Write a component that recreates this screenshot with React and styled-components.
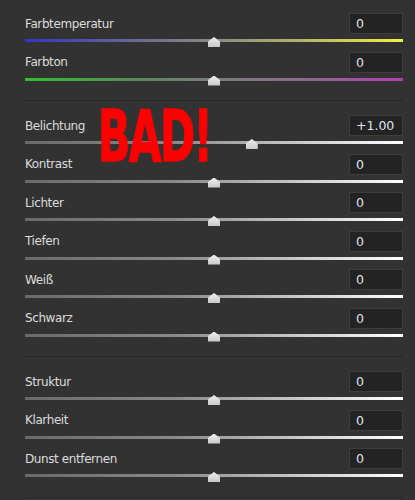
import styled, { createGlobalStyle } from "styled-components";

const Global = createGlobalStyle`
  html, body {
    margin: 0;
    padding: 0;
    background: #323232;
  }
  body {
    font-family: "DejaVu Sans", "Liberation Sans", sans-serif;
  }
`;

const Panel = styled.div`
  position: relative;
  width: 415px;
  height: 500px;
  overflow: hidden;
  background: #323232;
  padding: 0 12px 0 25px;
  box-sizing: border-box;
`;

const Section = styled.section`
  padding: ${(p) => (p.$first ? "13px" : "14px")} 0 10px;
  border-bottom: 1px solid #262626;
`;

const Row = styled.div`
  height: 38.5px;
  display: flex;
  flex-direction: column;
`;

const Header = styled.div`
  display: flex;
  align-items: center;
  justify-content: space-between;
  height: 21px;
`;

const Label = styled.span`
  color: #dcdcdc;
  font-size: 12px;
  letter-spacing: -0.4px;
`;

const ValueBox = styled.div`
  width: 54px;
  height: 21px;
  box-sizing: border-box;
  border: 1px solid #3d3d3d;
  background: #232323;
  color: #dfe4ee;
  font-size: 12.5px;
  line-height: 19px;
  padding-left: 6px;
`;

const SliderArea = styled.div`
  position: relative;
  height: 17px;
`;

const Track = styled.div`
  position: absolute;
  left: 0;
  right: 0;
  top: 5px;
  height: 3px;
  background: ${(p) => p.$bg};
`;

const Thumb = styled.div`
  position: absolute;
  top: 3px;
  width: 12px;
  height: 10px;
  margin-left: -6px;
  background: linear-gradient(#f0f0f0, #c8c8c8);
  clip-path: polygon(50% 0, 100% 45%, 100% 100%, 0 100%, 0 45%);
`;

const Stamp = styled.div`
  position: absolute;
  left: 98px;
  top: 101px;
  color: #ff0000;
  font-family: "DejaVu Sans", "Liberation Sans", sans-serif;
  font-weight: 700;
  font-size: 50px;
  line-height: 1;
  letter-spacing: -2px;
  -webkit-text-stroke: 1px #ff0000;
  transform: scale(0.85, 1.42);
  transform-origin: left top;
  white-space: nowrap;
`;

const grey = "linear-gradient(90deg, #6a6a6a 0%, #8a8a8a 40%, #cfcfcf 75%, #ffffff 100%)";

const sections = [
  [
    { label: "Farbtemperatur", value: "0", pos: 0.5, bg: "linear-gradient(90deg, #3434c8 0%, #6a6a92 30%, #8a8a82 50%, #b8b86a 75%, #f0f040 100%)" },
    { label: "Farbton", value: "0", pos: 0.5, bg: "linear-gradient(90deg, #2ec02e 0%, #5c8a5c 30%, #7c7c7c 50%, #8e6a8e 75%, #b43cb4 100%)" },
  ],
  [
    { label: "Belichtung", value: "+1.00", pos: 0.6, bg: grey },
    { label: "Kontrast", value: "0", pos: 0.5, bg: grey },
    { label: "Lichter", value: "0", pos: 0.5, bg: grey },
    { label: "Tiefen", value: "0", pos: 0.5, bg: grey },
    { label: "Weiß", value: "0", pos: 0.5, bg: grey },
    { label: "Schwarz", value: "0", pos: 0.5, bg: grey },
  ],
  [
    { label: "Struktur", value: "0", pos: 0.5, bg: grey },
    { label: "Klarheit", value: "0", pos: 0.5, bg: grey },
    { label: "Dunst entfernen", value: "0", pos: 0.5, bg: grey },
  ],
];

function App() {
  return (
    <>
      <Global />
      <Panel>
        {sections.map((rows, i) => (
          <Section key={i} $first={i === 0}>
            {rows.map((r) => (
              <Row key={r.label}>
                <Header>
                  <Label>{r.label}</Label>
                  <ValueBox>{r.value}</ValueBox>
                </Header>
                <SliderArea>
                  <Track $bg={r.bg} />
                  <Thumb style={{ left: `${r.pos * 100}%` }} />
                </SliderArea>
              </Row>
            ))}
          </Section>
        ))}
        <Stamp>BAD!</Stamp>
      </Panel>
    </>
  );
}

export default App;
